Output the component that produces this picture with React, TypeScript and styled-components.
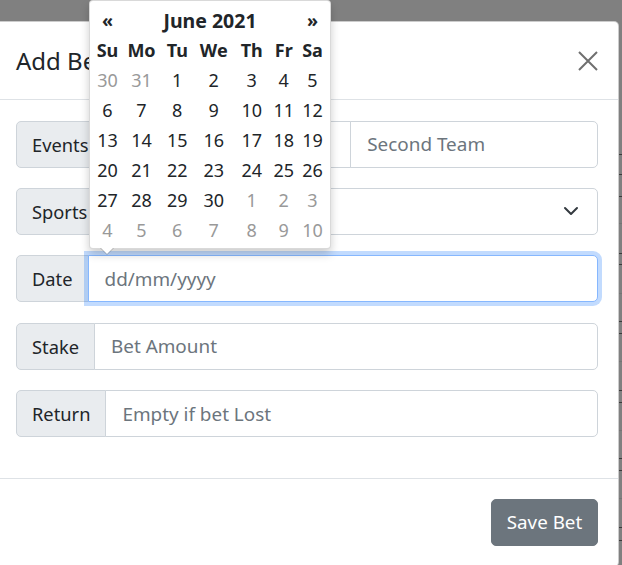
import React from "react";
import styled, { createGlobalStyle, css } from "styled-components";

const GlobalStyle = createGlobalStyle`
  html, body { margin: 0; padding: 0; }
  body {
    background: #808080;
    font-family: "Noto Sans", "Open Sans", sans-serif;
    color: #212529;
    overflow: hidden;
  }
  *, *::before, *::after { box-sizing: border-box; }
`;

const Screen = styled.div`
  position: relative;
  width: 622px;
  height: 565px;
  overflow: hidden;
  background: #808080;
`;

const PageBehind = styled.div`
  display: flex;
  flex-direction: column;
`;

const BehindLine = styled.div<{ $tone: "dark" | "light" }>`
  flex: none;
  border-bottom: 1px solid ${(p) => (p.$tone === "dark" ? "#3a3a3a" : "#747474")};
`;

const Modal = styled.div`
  position: absolute;
  left: -5px;
  top: 21px;
  width: 624px;
  background: #fff;
  border: 1px solid rgba(0, 0, 0, 0.2);
  border-radius: 5px;
`;

const Header = styled.div`
  height: 78px;
  padding: 0 20px;
  display: flex;
  align-items: center;
  justify-content: space-between;
  border-bottom: 1px solid #dee2e6;
`;

const Title = styled.h5`
  margin: 0;
  font-size: 24px;
  font-weight: 400;
  line-height: 1.2;
  color: #212529;
  padding-top: 2px;
`;

const CloseButton = styled.button`
  display: flex;
  align-items: center;
  justify-content: center;
  width: 20px;
  height: 20px;
  padding: 0;
  border: 0;
  background: transparent;
  color: #6f6f6f;
  cursor: pointer;
`;

const Body = styled.div`
  padding: 20.5px 20px;
`;

const InputGroup = styled.div`
  display: flex;
  height: 47px;
  margin-bottom: 20.4px;
`;

const Addon = styled.span`
  display: flex;
  align-items: center;
  padding: 0 15px;
  background: #e9ecef;
  border: 1px solid #ced4da;
  border-radius: 5px 0 0 5px;
  font-size: 18.3px;
  color: #212529;
  white-space: nowrap;
`;

const fieldBase = css`
  flex: 1 1 0;
  min-width: 0;
  margin-left: -1px;
  padding: 0 16px;
  border: 1px solid #ced4da;
  background: #fff;
  border-radius: 0;
  &:last-child {
    border-radius: 0 5px 5px 0;
  }
`;

const Field = styled.input<{ $focused?: boolean }>`
  ${fieldBase}
  font: 18.9px "Noto Sans", "Open Sans", sans-serif;
  color: #212529;
  outline: none;
  &::placeholder {
    color: #6c757d;
    opacity: 1;
  }
  ${(p) =>
    p.$focused &&
    css`
      position: relative;
      z-index: 3;
      border-color: #86b7fe;
      box-shadow: 0 0 0 4px rgba(13, 110, 253, 0.25);
    `}
`;

const SelectBox = styled.div`
  ${fieldBase}
  display: flex;
  align-items: center;
  justify-content: flex-end;
  padding-right: 18px;
  color: #343a40;
`;

const Footer = styled.div`
  display: flex;
  justify-content: flex-end;
  padding: 20px;
  border-top: 1px solid #dee2e6;
`;

const SaveButton = styled.button`
  width: 107px;
  height: 47px;
  border: 1px solid #6c757d;
  border-radius: 5px;
  background: #6c757d;
  color: #fff;
  font: 18.8px "Noto Sans", "Open Sans", sans-serif;
  padding: 0 14px;
`;

const Picker = styled.div`
  position: absolute;
  left: 89px;
  top: 0;
  z-index: 10;
  padding: 4px 3px 3px;
  background: #fff;
  border: 1px solid rgba(0, 0, 0, 0.15);
  border-radius: 4px;
  box-shadow: 0 5px 10px rgba(0, 0, 0, 0.2);
  &::before {
    content: "";
    position: absolute;
    left: 10px;
    bottom: -7px;
    border-left: 7px solid transparent;
    border-right: 7px solid transparent;
    border-top: 7px solid rgba(0, 0, 0, 0.2);
  }
  &::after {
    content: "";
    position: absolute;
    left: 11px;
    bottom: -6px;
    border-left: 6px solid transparent;
    border-right: 6px solid transparent;
    border-top: 6px solid #fff;
  }
`;

const CalTable = styled.table`
  border-collapse: collapse;
  table-layout: fixed;
  width: 234px;
  font-size: 18px;
`;

const HeadCell = styled.th<{ $title?: boolean }>`
  height: 30px;
  padding: 0;
  text-align: center;
  font-weight: 700;
  font-size: ${(p) => (p.$title ? "19.5px" : "18px")};
  color: #212529;
`;

const DayCell = styled.td<{ $muted?: boolean }>`
  height: 30px;
  padding: 0;
  text-align: center;
  font-weight: 400;
  color: ${(p) => (p.$muted ? "#999999" : "#212529")};
`;

const colWidths = [29, 39, 32.5, 40.5, 35.5, 28.5, 29];
const dayNames = ["Su", "Mo", "Tu", "We", "Th", "Fr", "Sa"];

type Day = { n: number; muted?: boolean };
const weeks: Day[][] = [
  [{ n: 30, muted: true }, { n: 31, muted: true }, { n: 1 }, { n: 2 }, { n: 3 }, { n: 4 }, { n: 5 }],
  [6, 7, 8, 9, 10, 11, 12].map((n) => ({ n })),
  [13, 14, 15, 16, 17, 18, 19].map((n) => ({ n })),
  [20, 21, 22, 23, 24, 25, 26].map((n) => ({ n })),
  [{ n: 27 }, { n: 28 }, { n: 29 }, { n: 30 }, { n: 1, muted: true }, { n: 2, muted: true }, { n: 3, muted: true }],
  [4, 5, 6, 7, 8, 9, 10].map((n) => ({ n, muted: true })),
];

const behindLines: { y: number; tone: "dark" | "light" }[] = [
  { y: 154, tone: "dark" },
  { y: 174, tone: "dark" },
  { y: 196, tone: "dark" },
  { y: 223, tone: "light" },
  { y: 253, tone: "dark" },
  { y: 264, tone: "dark" },
  { y: 293, tone: "light" },
  { y: 321, tone: "dark" },
  { y: 333, tone: "dark" },
  { y: 361, tone: "light" },
  { y: 390, tone: "dark" },
  { y: 402, tone: "dark" },
  { y: 430, tone: "light" },
  { y: 458, tone: "dark" },
  { y: 470, tone: "dark" },
  { y: 498, tone: "light" },
  { y: 527, tone: "dark" },
  { y: 540, tone: "dark" },
];

const CloseIcon = () => (
  <svg width="20" height="20" viewBox="0 0 20 20" fill="none">
    <path d="M1 1L19 19M19 1L1 19" stroke="currentColor" strokeWidth="2" />
  </svg>
);

const Chevron = () => (
  <svg width="16" height="16" viewBox="0 0 16 16" fill="none">
    <path d="M2 5l6 6 6-6" stroke="currentColor" strokeWidth="2" strokeLinecap="round" strokeLinejoin="round" />
  </svg>
);

export default function App() {
  let prev = -1;
  return (
    <Screen>
      <GlobalStyle />
      <PageBehind>
        {behindLines.map((l) => {
          const h = l.y - prev;
          prev = l.y;
          return <BehindLine key={l.y} $tone={l.tone} style={{ height: h }} />;
        })}
      </PageBehind>

      <Modal>
        <Header>
          <Title>Add Bet</Title>
          <CloseButton aria-label="Close">
            <CloseIcon />
          </CloseButton>
        </Header>
        <Body>
          <InputGroup>
            <Addon>Events</Addon>
            <Field placeholder="First Team" />
            <Field placeholder="Second Team" />
          </InputGroup>
          <InputGroup>
            <Addon>Sports</Addon>
            <SelectBox>
              <Chevron />
            </SelectBox>
          </InputGroup>
          <InputGroup>
            <Addon>Date</Addon>
            <Field placeholder="dd/mm/yyyy" $focused />
          </InputGroup>
          <InputGroup>
            <Addon>Stake</Addon>
            <Field placeholder="Bet Amount" />
          </InputGroup>
          <InputGroup>
            <Addon>Return</Addon>
            <Field placeholder="Empty if bet Lost" />
          </InputGroup>
        </Body>
        <Footer>
          <SaveButton>Save Bet</SaveButton>
        </Footer>
      </Modal>

      <Picker>
        <CalTable>
          <colgroup>
            {colWidths.map((w, i) => (
              <col key={i} style={{ width: w }} />
            ))}
          </colgroup>
          <thead>
            <tr>
              <HeadCell>«</HeadCell>
              <HeadCell colSpan={5} $title>
                June 2021
              </HeadCell>
              <HeadCell>»</HeadCell>
            </tr>
            <tr>
              {dayNames.map((d) => (
                <HeadCell key={d}>{d}</HeadCell>
              ))}
            </tr>
          </thead>
          <tbody>
            {weeks.map((w, i) => (
              <tr key={i}>
                {w.map((d, j) => (
                  <DayCell key={j} $muted={d.muted}>
                    {d.n}
                  </DayCell>
                ))}
              </tr>
            ))}
          </tbody>
        </CalTable>
      </Picker>
    </Screen>
  );
}
